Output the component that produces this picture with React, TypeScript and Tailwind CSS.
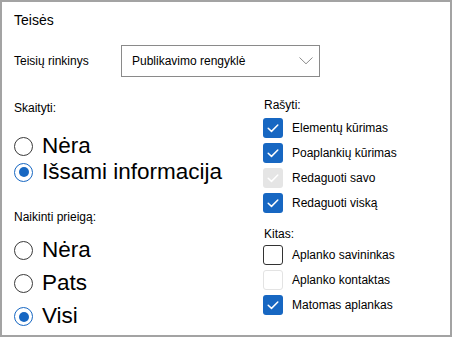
import React from 'react'

type Box = { label: string; checked: boolean; disabled?: boolean }

const writeItems: Box[] = [
  { label: 'Elementų kūrimas', checked: true },
  { label: 'Poaplankių kūrimas', checked: true },
  { label: 'Redaguoti savo', checked: true, disabled: true },
  { label: 'Redaguoti viską', checked: true },
]

const otherItems: Box[] = [
  { label: 'Aplanko savininkas', checked: false },
  { label: 'Aplanko kontaktas', checked: false, disabled: true },
  { label: 'Matomas aplankas', checked: true },
]

function Radio({ label, checked }: { label: string; checked?: boolean }) {
  return (
    <div className="flex items-center h-full">
      {checked ? (
        <span className="w-[19px] h-[19px] rounded-full border border-[#1767c2] flex items-center justify-center shrink-0">
          <span className="w-[10px] h-[10px] rounded-full bg-[#1767c2]" />
        </span>
      ) : (
        <span className="w-[19px] h-[19px] rounded-full border border-[#3a3a3a] shrink-0" />
      )}
      <span className="ml-[9px] text-[22.5px] leading-none text-black">{label}</span>
    </div>
  )
}

function Check({ label, checked, disabled }: Box) {
  let box = 'border border-[#333333] bg-white'
  if (checked && disabled) box = 'bg-[#e5e5e5]'
  else if (checked) box = 'bg-[#1767c2]'
  else if (disabled) box = 'border border-[#e3e3e3] bg-white'
  return (
    <div className="flex items-center h-[25px]">
      <span className={`w-[20px] h-[20px] rounded-[3px] flex items-center justify-center shrink-0 ${box}`}>
        {checked && (
          <svg width="20" height="20" viewBox="0 0 20 20">
            <polyline points="5.2,10.2 8.5,13.4 14.8,7" fill="none" stroke="white" strokeWidth="1.5" strokeLinecap="round" strokeLinejoin="round" />
          </svg>
        )}
      </span>
      <span className="ml-[9px] text-[12px] text-black">{label}</span>
    </div>
  )
}

export default function App() {
  return (
    <div
      className="w-[452px] h-[337px] border-2 border-[#a3a3a3] bg-white overflow-hidden pl-[12px]"
      style={{ fontFamily: '"Liberation Sans", Arial, sans-serif' }}
    >
      {/* Title */}
      <div className="pt-[8px] text-[14px] leading-[20px] text-black">Teisės</div>

      {/* Permission set */}
      <div className="mt-[15px] flex items-center h-[32px]">
        <div className="w-[107px] text-[12px] text-black">Teisių rinkinys</div>
        <div className="w-[199px] h-[32px] border border-[#8a8a8a] flex items-center justify-between pl-[10px] pr-[6px]">
          <span className="text-[12px] text-black">Publikavimo rengyklė</span>
          <svg width="14" height="8" viewBox="0 0 14 8">
            <polyline points="0.5,0.5 7,6.8 13.5,0.5" fill="none" stroke="#8c8c8c" strokeWidth="1" />
          </svg>
        </div>
      </div>

      <div className="mt-[20px] grid grid-cols-[249px_1fr]">
        {/* Left column */}
        <div className="pt-[3px]">
          <div className="text-[12px] leading-[16px] text-black">Skaityti:</div>
          <div className="mt-[17px]">
            <div className="h-[26px]"><Radio label="Nėra" /></div>
            <div className="h-[26px]"><Radio label="Išsami informacija" checked /></div>
          </div>
          <div className="mt-[24px] text-[12px] leading-[16px] text-black">Naikinti prieigą:</div>
          <div className="mt-[9px]">
            <div className="h-[33px]"><Radio label="Nėra" /></div>
            <div className="h-[33px]"><Radio label="Pats" /></div>
            <div className="h-[33px]"><Radio label="Visi" checked /></div>
          </div>
        </div>

        {/* Right column */}
        <div>
          <div className="pl-px text-[12px] leading-[16px] text-black">Rašyti:</div>
          <div className="mt-[2px]">
            {writeItems.map((it) => (
              <Check key={it.label} {...it} />
            ))}
          </div>
          <div className="mt-[11px] pl-px text-[12px] leading-[16px] text-black">Kitas:</div>
          <div>
            {otherItems.map((it) => (
              <Check key={it.label} {...it} />
            ))}
          </div>
        </div>
      </div>
    </div>
  )
}
